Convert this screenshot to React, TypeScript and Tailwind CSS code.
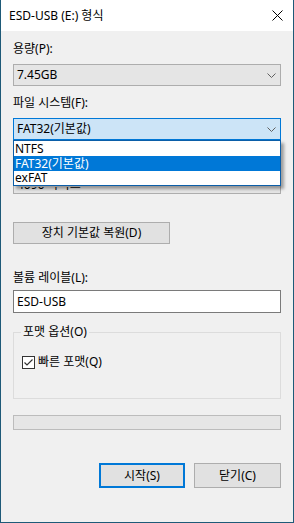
import React from "react";

const Chevron = () => (
  <svg width="9" height="5" viewBox="0 0 9 5" className="block">
    <path d="M0.5 0.5 L4.5 4.5 L8.5 0.5" fill="none" stroke="#606060" strokeWidth="1" />
  </svg>
);

export default function App() {
  return (
    <div
      className="w-[294px] h-[523px] bg-[#f0f0f0] border-x border-b border-[#1e5a78] flex flex-col relative overflow-hidden text-[12px] text-black"
      style={{ fontFamily: '"Noto Sans", "Noto Sans CJK KR", sans-serif' }}
    >
      {/* title bar */}
      <div className="h-[31px] bg-white flex items-center justify-between pl-[8px] pr-[10px] shrink-0">
        <span className="leading-[16px]">ESD-USB (E:) 형식</span>
        <svg width="11" height="11" viewBox="0 0 11 11">
          <path d="M0.5 0.5 L10.5 10.5 M10.5 0.5 L0.5 10.5" stroke="#000" strokeWidth="1" />
        </svg>
      </div>

      <div className="flex flex-col px-[12px]">
        <div className="mt-[10px] h-[16px] leading-[16px]">용량(P):</div>
        <div className="mt-[7px] h-[22px] bg-[#e5e5e5] border border-[#adadad] flex items-center justify-between pl-[3px] pr-[4px]">
          <span className="leading-[16px]">7.45GB</span>
          <Chevron />
        </div>

        <div className="mt-[9px] h-[16px] leading-[16px]">파일 시스템(F):</div>
        <div className="relative mt-[7px]">
          <div className="h-[22px] bg-[#cce4f7] border border-[#0078d7] flex items-center justify-between pl-[3px] pr-[4px]">
            <span className="leading-[16px]">FAT32(기본값)</span>
            <Chevron />
          </div>
          {/* dropdown list */}
          <div className="absolute left-0 right-0 top-[22px] z-10 bg-white border border-[#0b5ea8] shadow-[3px_3px_3px_rgba(0,0,0,0.35)] flex flex-col">
            <div className="h-[15px] leading-[15px] pl-[1px]">NTFS</div>
            <div className="h-[15px] leading-[15px] pl-[1px] bg-[#0078d7] text-white">FAT32(기본값)</div>
            <div className="h-[14px] leading-[14px] pl-[1px]">exFAT</div>
          </div>
        </div>

        {/* hidden row (covered by the dropdown list) */}
        <div className="mt-[9px] h-[16px]" />
        <div className="mt-[7px] h-[22px] bg-[#e5e5e5] border border-[#adadad] flex items-end justify-between pl-[3px] pr-[4px] overflow-hidden">
          <span className="leading-[16px] h-[6px] overflow-hidden block text-[12px]">
            <span className="block -translate-y-[10px]">4096 바이트</span>
          </span>
        </div>

        <div className="mt-[28px] w-[157px] h-[22px] bg-[#e1e1e1] border border-[#adadad] flex items-center justify-center">
          <span className="leading-[16px]">장치 기본값 복원(D)</span>
        </div>

        <div className="mt-[26px] h-[16px] leading-[16px]">볼륨 레이블(L):</div>
        <div className="mt-[4px] h-[23px] bg-white border border-[#7a7a7a] flex items-center pl-[3px]">
          <span className="leading-[16px]">ESD-USB</span>
        </div>

        <div className="relative mt-[19px] h-[67px] border border-[#dcdcdc] pl-[8px] pt-[21px]">
          <span className="absolute left-[7px] top-[-9px] px-[2px] bg-[#f0f0f0] leading-[16px]">포맷 옵션(O)</span>
          <div className="flex items-center gap-[3px]">
            <div className="w-[13px] h-[13px] bg-white border border-[#333333] flex items-center justify-center">
              <svg width="11" height="11" viewBox="0 0 11 11">
                <path d="M1.5 5.5 L4 8 L9.5 2.5" fill="none" stroke="#333333" strokeWidth="1.2" />
              </svg>
            </div>
            <span className="leading-[16px]">빠른 포맷(Q)</span>
          </div>
        </div>

        <div className="mt-[16px] h-[15px] bg-[#e6e6e6] border border-[#bcbcbc]" />

        <div className="mt-[33px] flex justify-end gap-[9px]">
          <div className="w-[86px] h-[25px] bg-[#e1e1e1] border-2 border-[#0078d7] flex items-center justify-center">
            <span className="leading-[16px]">시작(S)</span>
          </div>
          <div className="w-[87px] h-[25px] bg-[#e1e1e1] border border-[#adadad] flex items-center justify-center">
            <span className="leading-[16px]">닫기(C)</span>
          </div>
        </div>
      </div>
    </div>
  );
}
